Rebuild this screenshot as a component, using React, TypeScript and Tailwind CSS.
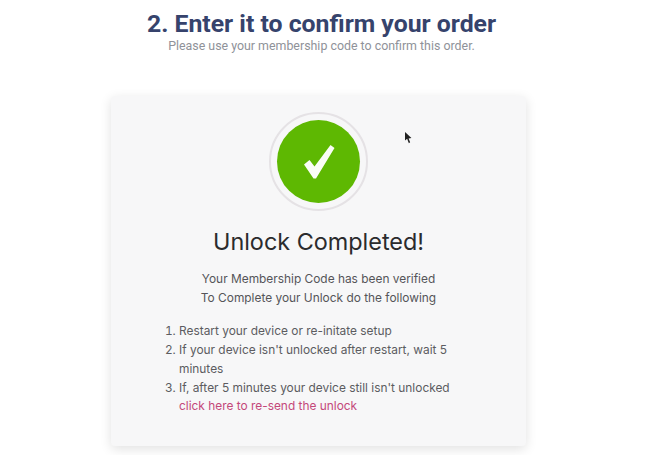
import React from 'react';

const App: React.FC = () => {
    return (
        <div className="relative h-[455px] w-[648px] overflow-hidden bg-white font-['Roboto',sans-serif]">
            <div className="flex w-[643px] flex-col items-center pt-[9px]">
                <h1 className="text-[24.8px] leading-[30px] font-bold text-[#36436c]">2. Enter it to confirm your order</h1>
                <p className="mt-[-1px] text-[12.4px] leading-[16px] text-[#8f9299]">Please use your membership code to confirm this order.</p>
            </div>

            <div className="ml-[111px] mt-[42px] h-[350px] w-[415px] rounded-[4px] bg-[#f7f7f8] pt-[16px] shadow-[0_3px_12px_rgba(0,0,0,0.12)] font-['Inter',sans-serif]">
                <div className="mx-auto flex h-[99px] w-[99px] items-center justify-center rounded-full border-2 border-[#e5e2e5]">
                    <div className="flex h-[83px] w-[83px] items-center justify-center rounded-full bg-[#5eb802]">
                        <svg width="34" height="36" viewBox="0 0 34 36">
                            <path d="M2 20.5 L7.5 16 L12.5 22.5 L28.5 1 L32.5 4 L14 34.5 L11.5 34.5 Z" fill="#fafdf5" />
                        </svg>
                    </div>
                </div>
                <h2 className="mt-[16px] text-center text-[23.4px] leading-[30px] font-normal text-[#2b2b2d]">Unlock Completed!</h2>
                <div className="mt-[13px] text-center text-[11.9px] leading-[18.7px] text-[#555559]">
                    <p>Your Membership Code has been verified</p>
                    <p>To Complete your Unlock do the following</p>
                </div>
                <ol className="mt-[15px] ml-[68px] w-[290px] list-decimal pl-0 text-[11.9px] leading-[18.7px] text-[#5c5c61]">
                    <li>Restart your device or re-initate setup</li>
                    <li>If your device isn't unlocked after restart, wait 5 minutes</li>
                    <li>
                        If, after 5 minutes your device still isn't unlocked{' '}
                        <span className="text-[#c4487a]">click here to re-send the unlock</span>
                    </li>
                </ol>
            </div>

            {/* mouse pointer caught in the recording */}
            <svg className="absolute left-[404px] top-[132px]" width="8" height="12" viewBox="0 0 9 14">
                <path d="M1 0 L1 10 L3.5 8 L5.5 13 L7 12 L5.2 7.5 L8.5 7 Z" fill="#222" />
            </svg>
        </div>
    );
};

export default App;
